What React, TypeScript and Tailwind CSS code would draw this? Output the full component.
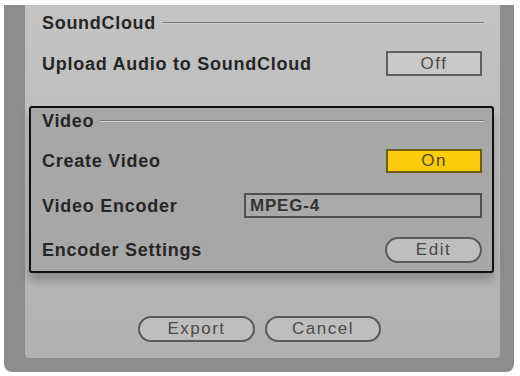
import React from "react";

const font = { fontFamily: '"Liberation Sans", Arial, sans-serif' };

function SectionHeader({ title }: { title: string }) {
  return (
    <div className="flex h-[20px] items-center gap-[6px]">
      <span className="text-[18px] font-bold tracking-[0.7px] text-[#262626] leading-none">{title}</span>
      <div className="h-[2px] flex-1 border-t border-[#7c7c7c] border-b-[#cfcfcf] border-b" />
    </div>
  );
}

function Label({ children }: { children: React.ReactNode }) {
  return (
    <span className="text-[18px] font-bold tracking-[0.75px] text-[#262626] leading-none">{children}</span>
  );
}

function RectButton({ label, on }: { label: string; on?: boolean }) {
  return (
    <div
      className={
        on
          ? "flex h-[24px] w-[96px] items-center justify-center border-2 border-[#6e5d10] bg-[#fccb0a] text-[17px] tracking-[1.5px] text-[#54470a]"
          : "flex h-[25px] w-[96px] items-center justify-center border-2 border-[#5f5f5f] bg-[#c8c8c8] text-[17px] tracking-[1.5px] text-[#4a4a4a]"
      }
    >
      {label}
    </div>
  );
}

function PillButton({ label, w }: { label: string; w: string }) {
  return (
    <div
      className={`flex h-[26px] ${w} items-center justify-center rounded-full border-2 border-[#5a5a5a] bg-[#bebebe] text-[17px] tracking-[1.5px] text-[#4a4a4a]`}
    >
      {label}
    </div>
  );
}

export default function App() {
  return (
    <div className="h-[376px] w-[520px] bg-white pl-[4px] pr-[6px] pt-[5px] pb-[4px]" style={font}>
      <div className="flex h-full w-full rounded-b-[8px] bg-[#8d8d8d] pl-[21px] pr-[14px] pb-[14px]">
        <div className="flex flex-1 flex-col rounded-b-[4px] bg-gradient-to-b from-[#c4c4c4] to-[#b1b1b1] pl-[4px] pr-[6px]">
          {/* SoundCloud */}
          <div className="mt-[8px] pl-[13px] pr-[10px]">
            <SectionHeader title="SoundCloud" />
          </div>
          <div className="mt-[18px] flex h-[25px] items-center justify-between pl-[13px] pr-[12px]">
            <Label>Upload Audio to SoundCloud</Label>
            <RectButton label="Off" />
          </div>

          {/* Video */}
          <div className="mt-[30px] flex h-[167px] flex-col rounded-[3px] border-2 border-[#111] bg-[#a7a7a7] pl-[11px] pr-[10px] pt-[3px] shadow-[0_8px_10px_rgba(0,0,0,0.22)]">
            <div className="-mr-[2px]">
              <SectionHeader title="Video" />
            </div>
            <div className="mt-[18px] flex h-[24px] items-center justify-between">
              <Label>Create Video</Label>
              <RectButton label="On" on />
            </div>
            <div className="mt-[20px] flex h-[25px] items-center justify-between">
              <Label>Video Encoder</Label>
              <div className="flex h-[25px] w-[238px] items-center border-2 border-[#505050] bg-[#a9a9a9] pl-[4px] text-[17px] font-bold tracking-[0.8px] text-[#333]">
                MPEG-4
              </div>
            </div>
            <div className="mt-[19px] flex h-[26px] items-center justify-between">
              <Label>Encoder Settings</Label>
              <PillButton label="Edit" w="w-[97px]" />
            </div>
          </div>

          {/* Actions */}
          <div className="mt-[43px] flex justify-center gap-[10px] pr-[4px]">
            <PillButton label="Export" w="w-[117px]" />
            <PillButton label="Cancel" w="w-[116px]" />
          </div>
        </div>
      </div>
    </div>
  );
}
